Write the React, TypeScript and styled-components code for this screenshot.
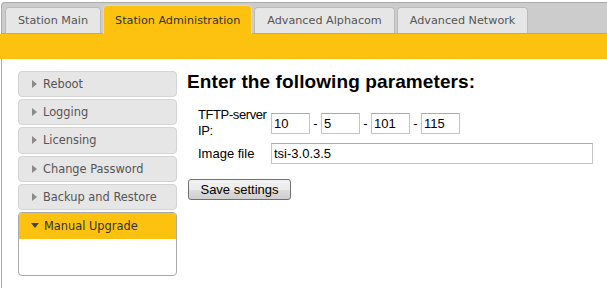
import styled, { createGlobalStyle } from 'styled-components';

const GlobalStyle = createGlobalStyle`
  html, body {
    margin: 0;
    padding: 0;
    background: #ffffff;
    overflow: hidden;
  }
  body {
    font-family: "Liberation Sans", Arial, sans-serif;
  }
`;

const Page = styled.div`
  width: 607px;
  height: 288px;
  display: flex;
  flex-direction: column;
  padding-top: 2px;
  box-sizing: border-box;
`;

const TabBar = styled.div`
  margin-left: 1px;
  height: 32px;
  box-sizing: border-box;
  background: #cccccc;
  border-top: 1px solid #aaaaaa;
  border-left: 1px solid #aaaaaa;
  border-bottom: 1px solid #aaaaaa;
  border-top-left-radius: 4px;
  display: flex;
  align-items: flex-end;
  gap: 2px;
  padding-left: 3px;
`;

const Tab = styled.div<{ $active?: boolean }>`
  height: ${(p) => (p.$active ? '29px' : '26px')};
  margin-bottom: ${(p) => (p.$active ? '-1px' : '0')};
  box-sizing: border-box;
  padding: ${(p) => (p.$active ? '1px 11px 0 11px' : '0 12px 0 12px')};
  display: flex;
  align-items: center;
  font-family: "DejaVu Sans", Verdana, sans-serif;
  font-size: 11.2px;
  color: ${(p) => (p.$active ? '#333333' : '#555555')};
  background: ${(p) => (p.$active ? '#fdc20f' : '#e6e6e6')};
  border: 1px solid ${(p) => (p.$active ? '#d8d8d8' : '#bbbbbb')};
  border-bottom: none;
  border-radius: 4px 4px 0 0;
  white-space: nowrap;
`;

const YellowBar = styled.div`
  height: 25px;
  background: #fdc20f;
`;

const Content = styled.div`
  flex: 1;
  margin-left: 1px;
  border-left: 1px solid #aaaaaa;
  display: flex;
  align-items: flex-start;
  gap: 10px;
  padding: 12px 0 0 16px;
`;

const SideMenu = styled.div`
  width: 159px;
  display: flex;
  flex-direction: column;
  gap: 2px;
`;

const MenuItem = styled.div`
  height: 26.2px;
  box-sizing: border-box;
  background: #e6e6e6;
  border: 1px solid #d4d4d4;
  border-radius: 4px;
  display: flex;
  align-items: center;
  padding-left: 13px;
  gap: 6px;
  font-family: "DejaVu Sans", Verdana, sans-serif;
  font-size: 11.4px;
  color: #555555;
`;

const OpenPanel = styled.div`
  border: 1px solid #aaaaaa;
  border-radius: 4px;
  overflow: hidden;
  height: 64px;
  box-sizing: border-box;
  background: #ffffff;
`;

const OpenHeader = styled.div`
  height: 26px;
  background: #fdc20f;
  display: flex;
  align-items: center;
  padding-left: 12px;
  gap: 5px;
  font-family: "DejaVu Sans", Verdana, sans-serif;
  font-size: 11.4px;
  color: #333333;
`;

const Main = styled.div`
  display: flex;
  flex-direction: column;
`;

const Heading = styled.h1`
  margin: 0;
  font-family: "Liberation Sans", Arial, sans-serif;
  font-weight: bold;
  font-size: 19px;
  letter-spacing: 0.1px;
  line-height: 21px;
  color: #000000;
`;

const Form = styled.div`
  margin: 15px 0 0 11px;
  display: grid;
  grid-template-columns: 73px auto;
  row-gap: 4px;
  align-items: center;
`;

const Label = styled.div<{ $tight?: boolean }>`
  font-size: 13px;
  line-height: 16px;
  letter-spacing: ${(p) => (p.$tight ? '-0.4px' : '0')};
  color: #000000;
  width: 72px;
`;

const IpRow = styled.div`
  display: flex;
  align-items: center;
`;

const Dash = styled.span`
  font-size: 13px;
  width: 11px;
  text-align: center;
`;

const TextInput = styled.input<{ $w: number }>`
  width: ${(p) => p.$w}px;
  height: 21px;
  box-sizing: border-box;
  border: 1px solid #c4c4c4;
  border-top-color: #ababab;
  padding: 0 2px;
  margin: 0;
  font-family: "Liberation Sans", Arial, sans-serif;
  font-size: 13px;
  color: #000000;
  background: #ffffff;
  outline: none;
`;

const SaveButton = styled.button`
  margin: 15px 0 0 1px;
  width: 103px;
  height: 21px;
  box-sizing: border-box;
  padding: 0;
  font-family: "Liberation Sans", Arial, sans-serif;
  font-size: 13px;
  color: #000000;
  border: 1px solid #707070;
  border-radius: 3px;
  background: linear-gradient(#f2f2f2 0%, #ebebeb 50%, #dddddd 51%, #cfcfcf 100%);
  align-self: flex-start;
`;

const Arrow = ({ down }: { down?: boolean }) =>
  down ? (
    <svg width="8" height="5" viewBox="0 0 8 5">
      <polygon points="0,0 8,0 4,5" fill="#444444" />
    </svg>
  ) : (
    <svg width="5" height="8" viewBox="0 0 5 8">
      <polygon points="0,0 5,4 0,8" fill="#8a8a8a" />
    </svg>
  );

const tabs = ['Station Main', 'Station Administration', 'Advanced Alphacom', 'Advanced Network'];
const menu = ['Reboot', 'Logging', 'Licensing', 'Change Password', 'Backup and Restore'];

export default function App() {
  return (
    <Page>
      <GlobalStyle />
      <TabBar>
        {tabs.map((t) => (
          <Tab key={t} $active={t === 'Station Administration'}>
            {t}
          </Tab>
        ))}
      </TabBar>
      <YellowBar />
      <Content>
        <SideMenu>
          {menu.map((m) => (
            <MenuItem key={m}>
              <Arrow />
              {m}
            </MenuItem>
          ))}
          <OpenPanel>
            <OpenHeader>
              <Arrow down />
              Manual Upgrade
            </OpenHeader>
          </OpenPanel>
        </SideMenu>
        <Main>
          <Heading>Enter the following parameters:</Heading>
          <Form>
            <Label $tight>TFTP-server IP:</Label>
            <IpRow>
              <TextInput $w={39} defaultValue="10" />
              <Dash>-</Dash>
              <TextInput $w={39} defaultValue="5" />
              <Dash>-</Dash>
              <TextInput $w={39} defaultValue="101" />
              <Dash>-</Dash>
              <TextInput $w={39} defaultValue="115" />
            </IpRow>
            <Label>Image file</Label>
            <TextInput $w={322} defaultValue="tsi-3.0.3.5" />
          </Form>
          <SaveButton>Save settings</SaveButton>
        </Main>
      </Content>
    </Page>
  );
}
